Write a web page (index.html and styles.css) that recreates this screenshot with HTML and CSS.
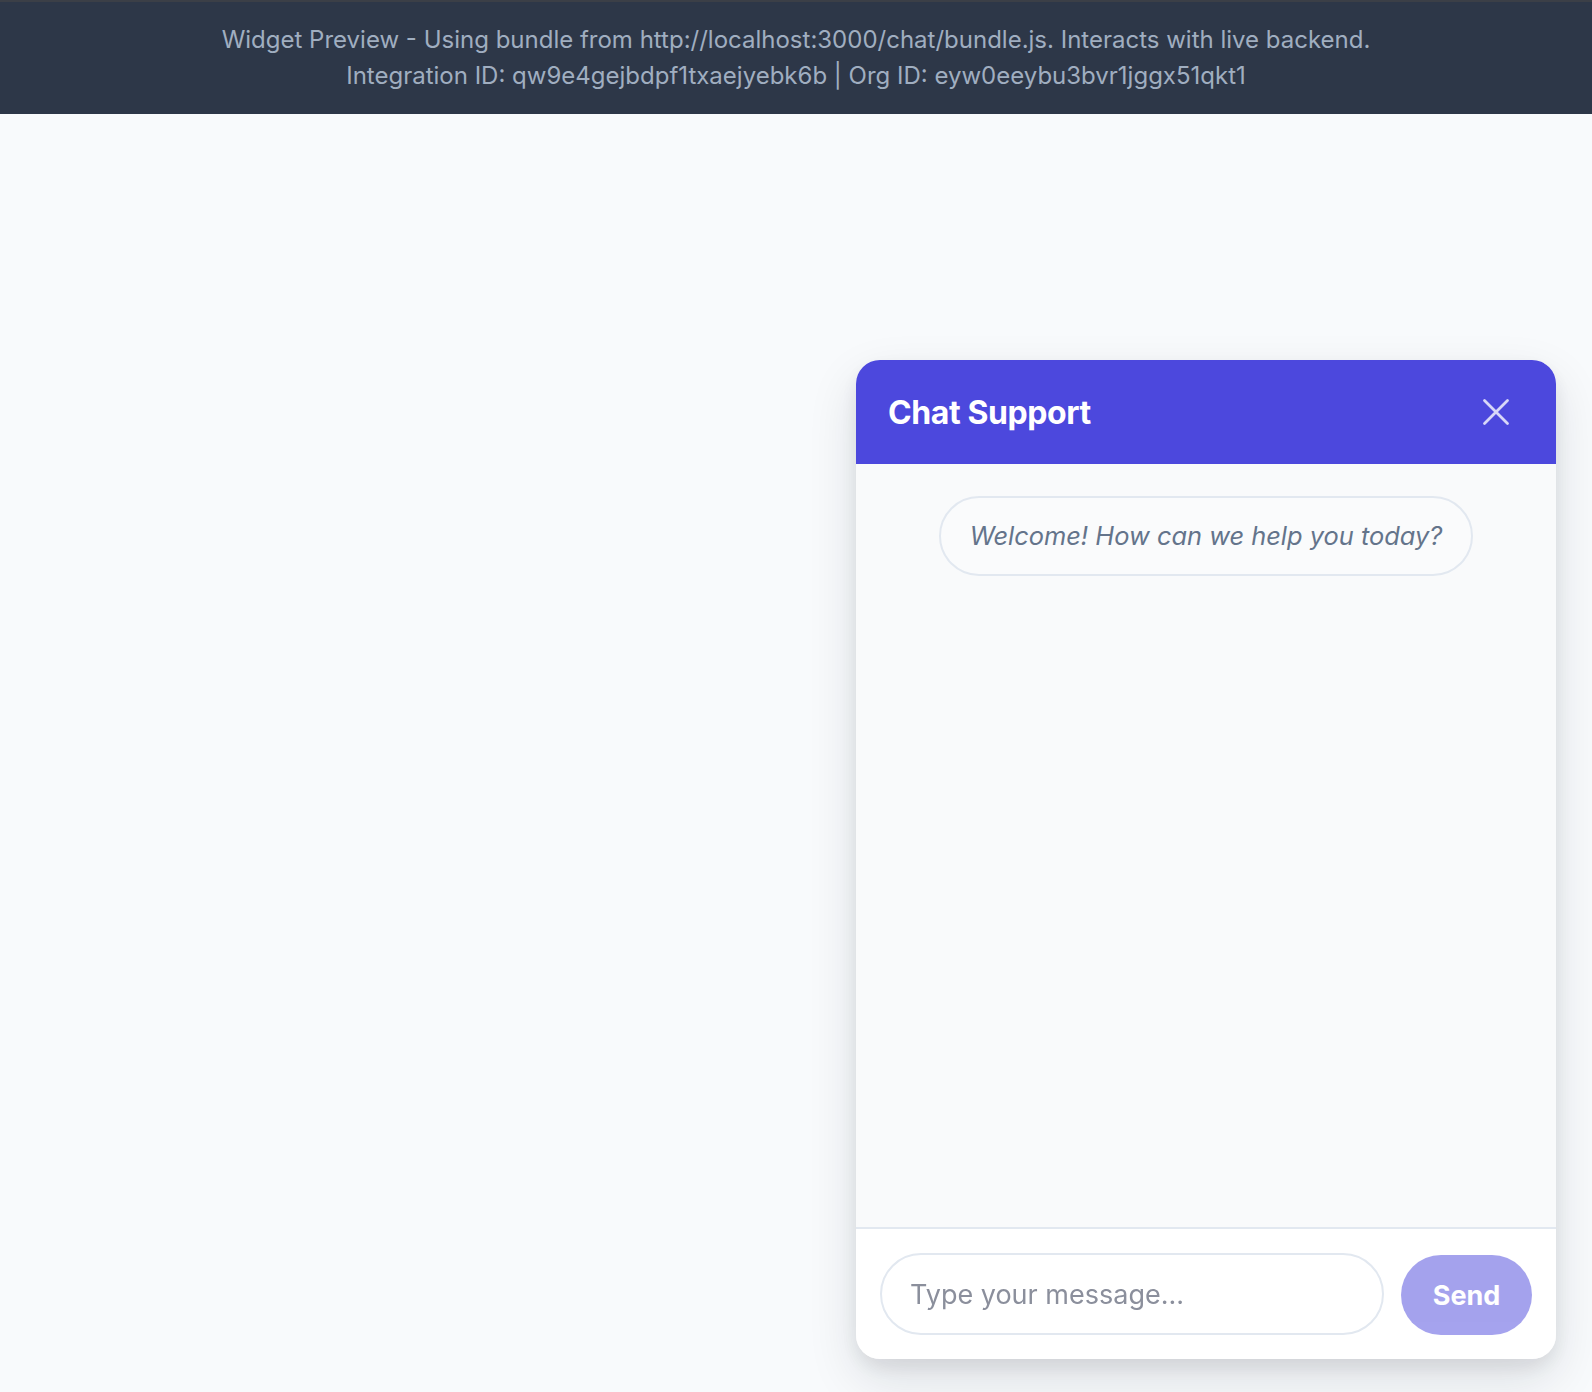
FILE: index.html
```html
<!DOCTYPE html>
<html lang="en">
<head>
  <meta charset="UTF-8" />
  <meta name="viewport" content="width=device-width, initial-scale=1" />
  <title>Widget Preview</title>
  <link rel="stylesheet" href="styles.css">
</head>
<body>
  <header class="preview-bar">
    <div>Widget Preview - Using bundle from http://localhost:3000/chat/bundle.js. Interacts with live backend.</div>
    <div>Integration ID: qw9e4gejbdpf1txaejyebk6b | Org ID: eyw0eeybu3bvr1jggx51qkt1</div>
  </header>

  <div class="chat-widget">
    <div class="chat-header">
      <h2>Chat Support</h2>
      <button class="chat-close" aria-label="Close chat">
        <svg viewBox="0 0 30 30" width="30" height="30" fill="none" stroke="currentColor" stroke-width="2.8" stroke-linecap="round">
          <path d="M3.5 3.5 L26.5 26.5 M26.5 3.5 L3.5 26.5" />
        </svg>
      </button>
    </div>

    <div class="chat-messages">
      <div class="chat-welcome">Welcome! How can we help you today?</div>
    </div>

    <div class="chat-footer">
      <input type="text" class="chat-input" placeholder="Type your message..." />
      <button class="chat-send" disabled>Send</button>
    </div>
  </div>
</body>
</html>
```

FILE: styles.css
```css
:root {
  --primary: #4c48dd;
  --border: #e2e8f0;
  --radius: 24px;
}

* {
  box-sizing: border-box;
}

body {
  margin: 0;
  font-family: 'Inter', 'Noto Sans', sans-serif;
  background: #f8fafc;
  min-height: 100vh;
}

.preview-bar {
  background: #2d3748;
  border-top: 2px solid #3b3f47;
  color: #a0aec0;
  font-size: 24px;
  line-height: 36px;
  text-align: center;
  padding: 20px 16px 20px;
}

/* floating widget, pinned to the bottom right corner */
.chat-widget {
  position: fixed;
  right: 36px;
  bottom: 33px;
  width: 700px;
  height: 999px;
  display: flex;
  flex-direction: column;
  border-radius: var(--radius);
  overflow: hidden;
  background: #f9fafb;
  box-shadow:
    0 20px 50px rgba(15, 23, 42, 0.12),
    0 8px 20px rgba(15, 23, 42, 0.08);
}

.chat-header {
  height: 104px;
  flex-shrink: 0;
  background: var(--primary);
  display: flex;
  align-items: center;
  justify-content: space-between;
  padding: 0 45px 0 32px;
}

.chat-header h2 {
  margin: 0;
  color: #fff;
  font-size: 32px;
  font-weight: 700;
  letter-spacing: -0.4px;
}

.chat-close {
  background: none;
  border: none;
  padding: 0;
  color: rgba(255, 255, 255, 0.78);
  cursor: pointer;
  display: flex;
}

.chat-messages {
  flex: 1;
  display: flex;
  flex-direction: column;
  align-items: center;
  padding: 32px 24px;
}

.chat-welcome {
  border: 2px solid var(--border);
  border-radius: 40px;
  background: #fafbfc;
  color: #64748b;
  font-style: italic;
  font-size: 25.4px;
  line-height: 44px;
  padding: 16px 29px;
}

.chat-footer {
  flex-shrink: 0;
  background: #fff;
  border-top: 2px solid var(--border);
  display: flex;
  align-items: center;
  gap: 17px;
  padding: 24px 24px;
}

.chat-input {
  flex: 1;
  height: 82px;
  border: 2px solid var(--border);
  border-radius: 41px;
  padding: 0 28px;
  font-family: inherit;
  font-size: 27px;
  color: #1e293b;
  background: #fff;
  outline: none;
}

.chat-input::placeholder {
  color: #8b8f9c;
}

.chat-send {
  width: 131px;
  height: 80px;
  margin-top: 2px;
  border: none;
  border-radius: 40px;
  background: var(--primary);
  opacity: 0.5;
  color: #fff;
  font-family: inherit;
  font-size: 27px;
  font-weight: 700;
}
```
